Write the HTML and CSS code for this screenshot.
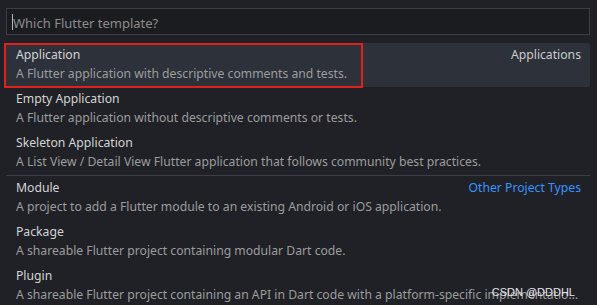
FILE: index.html
```html
<!DOCTYPE html>
<html lang="en">
<head>
  <meta charset="UTF-8" />
  <meta name="viewport" content="width=device-width, initial-scale=1.0"/>
  <title>Which Flutter template?</title>
  <link rel="stylesheet" href="styles.css">
</head>
<body>

  <div class="picker">
    <div class="search">
      <span class="caret"></span>
      <span class="placeholder">Which Flutter template?</span>
    </div>

    <ul class="list">
      <li class="item selected">
        <div class="item-head">
          <span class="title">Application</span>
          <span class="group">Applications</span>
        </div>
        <div class="desc">A Flutter application with descriptive comments and tests.</div>
        <span class="highlight"></span>
      </li>
      <li class="item">
        <div class="item-head"><span class="title">Empty Application</span></div>
        <div class="desc">A Flutter application without descriptive comments or tests.</div>
      </li>
      <li class="item">
        <div class="item-head"><span class="title">Skeleton Application</span></div>
        <div class="desc">A List View / Detail View Flutter application that follows community best practices.</div>
      </li>
      <li class="item first-of-group">
        <div class="item-head">
          <span class="title">Module</span>
          <span class="group link">Other Project Types</span>
        </div>
        <div class="desc">A project to add a Flutter module to an existing Android or iOS application.</div>
      </li>
      <li class="item">
        <div class="item-head"><span class="title">Package</span></div>
        <div class="desc">A shareable Flutter project containing modular Dart code.</div>
      </li>
      <li class="item">
        <div class="item-head"><span class="title">Plugin</span></div>
        <div class="desc">A shareable Flutter project containing an API in Dart code with a platform-specific implementation for Android, iOS and more.</div>
      </li>
    </ul>
  </div>

  <div class="watermark">CSDN @DDDHL</div>

</body>
</html>
```

FILE: styles.css
```css
body {
  margin: 0;
  background-color: #1f2126;
  font-family: 'Noto Sans', 'Open Sans', sans-serif;
  font-size: 12.2px;
  overflow: hidden;
}
.picker {
  padding: 8px 4px 0 4px;
}
.search {
  display: flex;
  align-items: center;
  height: 25px;
  margin: 0 3px 0 2px;
  padding-left: 5px;
  border: 1px solid #3b3e44;
  background-color: #1b1c20;
}
.caret {
  width: 1px;
  height: 16px;
  background-color: #b8b8b8;
}
.placeholder {
  color: #8c8c8c;
  font-size: 13px;
  padding-top: 2px;
}
.list {
  list-style: none;
  margin: 8px 0 0 0;
  padding: 0;
}
.item {
  position: relative;
  height: 43px;
  padding: 1px 9px 0 12px;
  margin-right: 3px;
}
.item.selected {
  background-color: #2c313a;
  border-radius: 2px;
}
.item.first-of-group {
  border-top: 1px solid #3b3e44;
  margin-left: 2px;
  padding-left: 10px;
}
.item-head {
  display: flex;
  justify-content: space-between;
  height: 22px;
  line-height: 22px;
}
.title {
  color: #d4d4d4;
}
.group {
  color: #cccccc;
}
.group.link {
  color: #3794ff;
}
.desc {
  height: 21px;
  line-height: 16px;
  color: #9d9d9d;
  white-space: nowrap;
  overflow: hidden;
  text-overflow: ellipsis;
}
.highlight {
  position: absolute;
  left: 0;
  top: 0;
  width: 355px;
  height: 41px;
  border: 2px solid #e0201c;
}
.watermark {
  position: absolute;
  right: 22px;
  bottom: 7px;
  color: #e6e6e6;
  font-size: 11px;
  font-family: 'Liberation Sans', sans-serif;
}
```
